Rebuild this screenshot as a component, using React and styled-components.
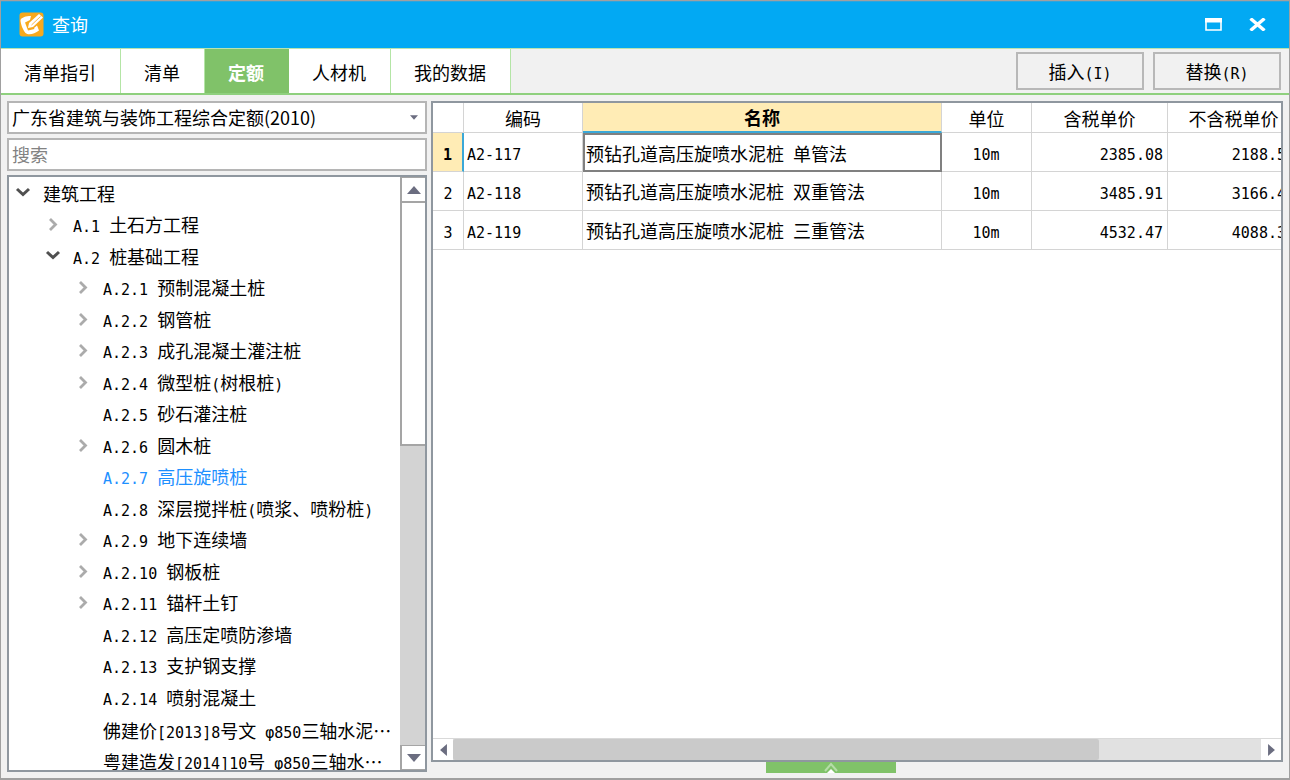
import React from 'react';
import styled, { createGlobalStyle, css } from 'styled-components';

const GlobalStyle = createGlobalStyle`
  * {
    box-sizing: border-box;
  }

  body {
    margin: 0;
    color: #000;
    font-family: 'Noto Sans CJK SC', sans-serif;
    font-size: 18px;
    line-height: 24px;
  }

  button, input, select {
    margin: 0;
    padding: 0;
    border: 0;
    border-radius: 0;
    color: inherit;
    font: inherit;
  }
`;

const Window = styled.div`
  display: flex;
  flex-direction: column;
  height: 100vh;
  border: 1px solid #a0a0a0;
  border-bottom-width: 2px;
  background: #f1f1f1;
  overflow: hidden;
`;

const TitleBar = styled.header`
  display: flex;
  align-items: center;
  gap: 8px;
  flex: none;
  height: 47px;
  padding: 0 14px 2px 18px;
  border-top: 1px solid #2fa4dc;
  background: #02a9f3;
  color: #fff;
`;

const Title = styled.h1`
  flex: 1;
  margin: 0;
  font-size: 18px;
  font-weight: 400;
`;

const WindowButton = styled.button`
  display: flex;
  align-items: center;
  justify-content: center;
  width: 36px;
  height: 30px;
  background: none;
  color: #fff;
`;

const Toolbar = styled.div`
  display: flex;
  align-items: center;
  flex: none;
  height: 47px;
  padding-right: 8px;
  border-top: 1px solid #b9e3b0;
  border-bottom: 2px solid #8fd07e;
`;

const Tabs = styled.nav`
  display: flex;
  flex: 1;
  align-self: stretch;
`;

const Tab = styled.button`
  padding: 2px 24px 0 23px;
  border-right: 1px solid #b4e5a6;
  background: #fff;

  ${({ $active }) => $active && css`
    border-color: #80c269;
    background: #80c269;
    color: #fff;
    font-weight: 700;
  `}
`;

const Actions = styled.div`
  display: flex;
  gap: 9px;
`;

const ActionButton = styled.button`
  width: 128px;
  height: 38px;
  border: 2px solid #b8b8b8;
  background: #f1f1f1;
`;

const Body = styled.main`
  display: flex;
  gap: 4px;
  flex: 1;
  min-height: 0;
  padding: 6px 6px 0;
`;

const Sidebar = styled.aside`
  display: flex;
  flex-direction: column;
  gap: 4px;
  flex: none;
  width: 420px;
  padding-bottom: 6px;
`;

const SelectBox = styled.div`
  display: flex;
  align-items: center;
  height: 33px;
  padding-right: 7px;
  border: 2px solid #b5b5b5;
  background: #fff;
`;

const Select = styled.select`
  flex: 1;
  height: 100%;
  padding: 0 0 2px 3px;
  appearance: none;
  background: none;
`;

const SearchInput = styled.input`
  height: 33px;
  padding: 0 3px 2px;
  border: 2px solid #b5b5b5;
  background: #fff;

  &::placeholder {
    color: #828282;
    opacity: 1;
  }
`;

const TreePanel = styled.div`
  display: flex;
  flex: 1;
  min-height: 0;
  border: 2px solid #8f979f;
  background: #fff;
`;

const Tree = styled.div`
  flex: 1;
  min-width: 0;
  overflow: hidden;
`;

const NodeList = styled.ul`
  margin: 0;
  padding: ${({ $spaced }) => ($spaced ? '2px 0 0' : '0')};
  list-style: none;
`;

const Node = styled.li`
  display: flex;
  align-items: center;
  gap: 12px;
  height: 31px;
  padding-left: ${({ $level }) => 6 + $level * 30}px;
  color: ${({ $selected }) => ($selected ? '#1e90ff' : '#000')};
  white-space: pre;

  &:nth-child(even) {
    height: 32px;
  }
`;

const Toggle = styled.button`
  display: flex;
  flex: none;
  align-items: center;
  justify-content: center;
  width: 16px;
  height: 20px;
  background: none;
`;

const ToggleSpace = styled.span`
  flex: none;
  width: 16px;
`;

// half-width characters take half of a full-width one
const Half = styled.span`
  font-family: 'DejaVu Sans Mono', monospace;
  font-size: 15px;
  line-height: 0;
`;

const VerticalBar = styled.div`
  display: flex;
  flex-direction: column;
  flex: none;
  width: 25px;
  background: #d3d3d3;
`;

const VerticalThumb = styled.div`
  height: 45%;
  border: 1px solid #a5a5a5;
  border-width: 1px 0 2px 2px;
  background: #fff;
`;

const VerticalTrack = styled.div`
  flex: 1;
`;

const VerticalButton = styled.button`
  display: flex;
  align-items: center;
  justify-content: center;
  height: 25px;
  border: 1px solid #a5a5a5;
  border-width: 1px 0 1px 2px;
  background: #fff;
`;

const Content = styled.section`
  display: flex;
  flex-direction: column;
  flex: 1;
  min-width: 0;
`;

const GridPanel = styled.div`
  display: flex;
  flex-direction: column;
  flex: 1;
  min-height: 0;
  border: 2px solid #8f979f;
  background: #fff;
`;

const GridView = styled.div`
  flex: 1;
  min-height: 0;
  overflow: hidden;
`;

const Table = styled.table`
  width: 867px;
  table-layout: fixed;
  border-collapse: separate;
  border-spacing: 0;
  white-space: pre;
`;

const Col = styled.col`
  width: ${({ $width }) => $width}px;
`;

const HeadCell = styled.th`
  height: 30px;
  padding: 0;
  border-right: 1px solid #d4d4d4;
  border-bottom: 1px solid #d4d4d4;
  font-weight: 400;

  ${({ $current }) => $current && css`
    border-bottom: 2px solid #3ba8d8;
    background: #ffecb5;
    font-weight: 700;
  `}
`;

const Cell = styled.td`
  height: 39px;
  padding: 0 4px 0 3px;
  border-right: 1px solid #d4d4d4;
  border-bottom: 1px solid #d4d4d4;
  text-align: ${({ $align }) => $align || 'left'};

  ${({ $current }) => $current && css`
    padding-left: 1px;
    border: 2px solid #808080;
  `}

  ${({ $cut }) => $cut && css`
    padding-right: 13px;
  `}
`;

const RowNumber = styled.th`
  padding: 0;
  border-right: 1px solid #d4d4d4;
  border-bottom: 1px solid #d4d4d4;
  font-weight: 400;

  ${({ $current }) => $current && css`
    border-right: 2px solid #3ba8d8;
    background: #ffecb5;
    font-weight: 700;
  `}
`;

const HorizontalBar = styled.div`
  display: flex;
  flex: none;
  height: 22px;
  border-top: 1px solid #d9d9d9;
  background: #e1e1e1;
`;

const HorizontalButton = styled.button`
  display: flex;
  align-items: center;
  justify-content: center;
  width: 20px;
  background: #fff;
`;

const HorizontalTrack = styled.div`
  flex: 1;
`;

const HorizontalThumb = styled.div`
  width: 80%;
  height: 100%;
  background: #cacaca;
  border-radius: 2px;
`;

const Footer = styled.div`
  display: flex;
  justify-content: center;
  height: 16px;
  padding-right: 52px;
`;

const ExpandButton = styled.button`
  display: flex;
  justify-content: center;
  width: 130px;
  height: 11px;
  background: #80c269;
`;

const nodes = [
  { level: 0, label: '建筑工程', state: 'open' },
  { level: 1, label: 'A.1 土石方工程', state: 'closed' },
  { level: 1, label: 'A.2 桩基础工程', state: 'open' },
  { level: 2, label: 'A.2.1 预制混凝土桩', state: 'closed' },
  { level: 2, label: 'A.2.2 钢管桩', state: 'closed' },
  { level: 2, label: 'A.2.3 成孔混凝土灌注桩', state: 'closed' },
  { level: 2, label: 'A.2.4 微型桩(树根桩)', state: 'closed' },
  { level: 2, label: 'A.2.5 砂石灌注桩' },
  { level: 2, label: 'A.2.6 圆木桩', state: 'closed' },
  { level: 2, label: 'A.2.7 高压旋喷桩', selected: true },
  { level: 2, label: 'A.2.8 深层搅拌桩(喷浆、喷粉桩)' },
  { level: 2, label: 'A.2.9 地下连续墙', state: 'closed' },
  { level: 2, label: 'A.2.10 钢板桩', state: 'closed' },
  { level: 2, label: 'A.2.11 锚杆土钉', state: 'closed' },
  { level: 2, label: 'A.2.12 高压定喷防渗墙' },
  { level: 2, label: 'A.2.13 支护钢支撑' },
  { level: 2, label: 'A.2.14 喷射混凝土' },
];

const documents = [
  { level: 2, label: '佛建价[2013]8号文 φ850三轴水泥…' },
  { level: 2, label: '粤建造发[2014]10号 φ850三轴水…' },
];

const tabs = ['清单指引', '清单', '定额', '人材机', '我的数据'];

const rows = [
  { code: 'A2-117', name: '预钻孔道高压旋喷水泥桩 单管法', unit: '10m', price: '2385.08', net: '2188.5' },
  { code: 'A2-118', name: '预钻孔道高压旋喷水泥桩 双重管法', unit: '10m', price: '3485.91', net: '3166.4' },
  { code: 'A2-119', name: '预钻孔道高压旋喷水泥桩 三重管法', unit: '10m', price: '4532.47', net: '4088.3' },
];

const Label = ({ text }) =>
  text.split(/([\x20-\x7eφ]+)/).filter(Boolean).map((part, i) => (
    /^[\x20-\x7eφ]/.test(part) ? <Half key={i}>{part}</Half> : part
  ));

const Logo = () => (
  <svg width="25" height="25" viewBox="0 0 25 25" aria-hidden="true">
    <rect x="0.5" y="0.5" width="24" height="24" rx="3" fill="#f8a91c" />
    <path d="M12 4 C7 4 2.5 5.5 1.5 8 C1.5 12 4 18 6.5 21 C9.5 23.5 15.5 22 20 18.5 L18 13.5 L15 16 L15.5 17 L9 18.5 L6 10.5 L11 8 Z" fill="#fff" />
    <path d="M9 16 L10 11 L20 2 L24 5.5 L14 15 Z" fill="#fff" />
    <path d="M12.5 13 L21.5 4.5" stroke="#f8b848" strokeWidth="1" fill="none" />
  </svg>
);

const Arrow = ({ direction, width = 14, height = 8 }) => {
  const shapes = {
    up: '0,8 7,0 14,8',
    down: '0,0 14,0 7,8',
    left: '8,0 8,14 0,7',
    right: '0,0 8,7 0,14',
  };
  const upright = direction === 'up' || direction === 'down';
  return (
    <svg width={width} height={height} viewBox={upright ? '0 0 14 8' : '0 0 8 14'} aria-hidden="true">
      <polygon points={shapes[direction]} fill="#6b6d80" />
    </svg>
  );
};

const Chevron = ({ open }) => (
  <svg width="16" height="16" viewBox="0 0 16 16" fill="none" aria-hidden="true">
    {open
      ? <path d="M2 4 L8 9.5 L14 4" stroke="#505050" strokeWidth="3" />
      : <path d="M5 3 L10.5 8.5 L5 14" stroke="#ababab" strokeWidth="2.8" />}
  </svg>
);

const TreeNode = ({ node }) => (
  <Node $level={node.level} $selected={node.selected}>
    {node.state
      ? (
        <Toggle aria-label={node.label}>
          <Chevron open={node.state === 'open'} />
        </Toggle>
      )
      : <ToggleSpace />}
    <span><Label text={node.label} /></span>
  </Node>
);

const PriceTable = () => (
  <Table>
    <colgroup>
      <Col $width={31} />
      <Col $width={119} />
      <Col $width={359} />
      <Col $width={90} />
      <Col $width={136} />
      <Col $width={132} />
    </colgroup>
    <thead>
      <tr>
        <HeadCell />
        <HeadCell>编码</HeadCell>
        <HeadCell $current>名称</HeadCell>
        <HeadCell>单位</HeadCell>
        <HeadCell>含税单价</HeadCell>
        <HeadCell>不含税单价</HeadCell>
      </tr>
    </thead>
    <tbody>
      {rows.map((row, i) => (
        <tr key={row.code}>
          <RowNumber $current={i === 0}><Label text={`${i + 1}`} /></RowNumber>
          <Cell><Label text={row.code} /></Cell>
          <Cell $current={i === 0}><Label text={row.name} /></Cell>
          <Cell $align="center"><Label text={row.unit} /></Cell>
          <Cell $align="right"><Label text={row.price} /></Cell>
          <Cell $align="right" $cut><Label text={row.net} /></Cell>
        </tr>
      ))}
    </tbody>
  </Table>
);

const App = () => (
  <>
    <GlobalStyle />
    <Window lang="zh-CN">
      <TitleBar>
        <Logo />
        <Title>查询</Title>
        <WindowButton aria-label="最大化">
          <svg width="17" height="13" viewBox="0 0 17 13" aria-hidden="true">
            <path d="M1 1 H16 V12 H1 Z" fill="none" stroke="#fff" strokeWidth="1.6" />
            <path d="M0 0 H17 V4.5 H0 Z" fill="#fff" />
          </svg>
        </WindowButton>
        <WindowButton aria-label="关闭">
          <svg width="17" height="13" viewBox="0 0 17 13" aria-hidden="true">
            <path d="M1.5 0.5 L15.5 12.5 M15.5 0.5 L1.5 12.5" stroke="#fff" strokeWidth="3.4" />
          </svg>
        </WindowButton>
      </TitleBar>
      <Toolbar>
        <Tabs>
          {tabs.map(tab => <Tab key={tab} $active={tab === '定额'}>{tab}</Tab>)}
        </Tabs>
        <Actions>
          <ActionButton><Label text="插入(I)" /></ActionButton>
          <ActionButton><Label text="替换(R)" /></ActionButton>
        </Actions>
      </Toolbar>
      <Body>
        <Sidebar>
          <SelectBox>
            <Select aria-label="定额">
              <option>广东省建筑与装饰工程综合定额(2010)</option>
            </Select>
            <Arrow direction="down" width={8} height={5} />
          </SelectBox>
          <SearchInput type="text" aria-label="搜索" placeholder="搜索" />
          <TreePanel>
            <Tree>
              <NodeList>
                {nodes.map(node => <TreeNode key={node.label} node={node} />)}
              </NodeList>
              <NodeList $spaced>
                {documents.map(node => <TreeNode key={node.label} node={node} />)}
              </NodeList>
            </Tree>
            <VerticalBar>
              <VerticalButton aria-label="向上"><Arrow direction="up" /></VerticalButton>
              <VerticalTrack><VerticalThumb /></VerticalTrack>
              <VerticalButton aria-label="向下"><Arrow direction="down" /></VerticalButton>
            </VerticalBar>
          </TreePanel>
        </Sidebar>
        <Content>
          <GridPanel>
            <GridView><PriceTable /></GridView>
            <HorizontalBar>
              <HorizontalButton aria-label="向左"><Arrow direction="left" width={7} height={12} /></HorizontalButton>
              <HorizontalTrack><HorizontalThumb /></HorizontalTrack>
              <HorizontalButton aria-label="向右"><Arrow direction="right" width={7} height={12} /></HorizontalButton>
            </HorizontalBar>
          </GridPanel>
          <Footer>
            <ExpandButton aria-label="展开">
              <svg width="16" height="11" viewBox="0 0 16 11" fill="none" aria-hidden="true">
                <path d="M2 9 L8 2 L14 9" stroke="#b5dca8" strokeWidth="2" />
                <path d="M4 11 L8 7 L12 11 Z" fill="#fff" />
              </svg>
            </ExpandButton>
          </Footer>
        </Content>
      </Body>
    </Window>
  </>
);

export default App;
